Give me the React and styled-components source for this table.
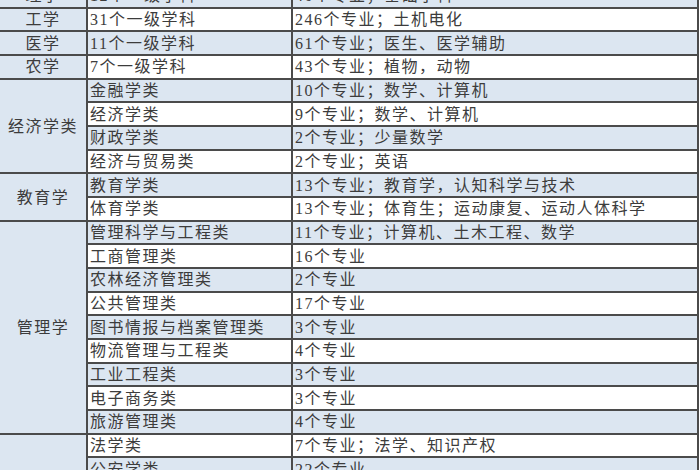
import styled, { createGlobalStyle } from "styled-components";

const GlobalStyle = createGlobalStyle`
  html, body {
    margin: 0;
    padding: 0;
    background: #ffffff;
  }
`;

const groups = [
  { name: "理学", rows: [["12个一级学科", "40个专业；基础学科"]] },
  { name: "工学", rows: [["31个一级学科", "246个专业；土机电化"]] },
  { name: "医学", rows: [["11个一级学科", "61个专业；医生、医学辅助"]] },
  { name: "农学", rows: [["7个一级学科", "43个专业；植物，动物"]] },
  {
    name: "经济学类",
    rows: [
      ["金融学类", "10个专业；数学、计算机"],
      ["经济学类", "9个专业；数学、计算机"],
      ["财政学类", "2个专业；少量数学"],
      ["经济与贸易类", "2个专业；英语"],
    ],
  },
  {
    name: "教育学",
    rows: [
      ["教育学类", "13个专业；教育学，认知科学与技术"],
      ["体育学类", "13个专业；体育生；运动康复、运动人体科学"],
    ],
  },
  {
    name: "管理学",
    rows: [
      ["管理科学与工程类", "11个专业；计算机、土木工程、数学"],
      ["工商管理类", "16个专业"],
      ["农林经济管理类", "2个专业"],
      ["公共管理类", "17个专业"],
      ["图书情报与档案管理类", "3个专业"],
      ["物流管理与工程类", "4个专业"],
      ["工业工程类", "3个专业"],
      ["电子商务类", "3个专业"],
      ["旅游管理类", "4个专业"],
    ],
  },
  {
    name: "法学",
    rows: [
      ["法学类", "7个专业；法学、知识产权"],
      ["公安学类", "22个专业"],
      ["政治学类", "4个专业"],
      ["社会学类", "5个专业"],
      ["民族学类", "1个专业"],
    ],
  },
];

export default function App() {
  let index = 0;
  return (
    <>
      <GlobalStyle />
      <Viewport>
        <Table>
          <colgroup>
            <col style={{ width: 88 }} />
            <col style={{ width: 205 }} />
            <col />
          </colgroup>
          <tbody>
            {groups.map((group) =>
              group.rows.map(([sub, detail], i) => {
                const shaded = index++ % 2 === 0;
                return (
                  <Row key={group.name + sub} $shaded={shaded}>
                    {i === 0 && (
                      <GroupCell rowSpan={group.rows.length}>{group.name}</GroupCell>
                    )}
                    <Cell>{sub}</Cell>
                    <Cell>{detail}</Cell>
                  </Row>
                );
              })
            )}
          </tbody>
        </Table>
      </Viewport>
    </>
  );
}

const Viewport = styled.div`
  width: 700px;
  height: 470px;
  overflow: hidden;
  background: #ffffff;
`;

const Table = styled.table`
  width: 701px;
  margin: -17px 0 0 -2px;
  border-collapse: collapse;
  table-layout: fixed;
  font-family: "Liberation Serif", "Noto Sans CJK SC", serif;
  font-size: 16px;
  letter-spacing: 1.5px;
  color: #3c3c3c;
`;

const Row = styled.tr`
  height: 23.68px;
  background: ${(p) => (p.$shaded ? "#dce6f1" : "#ffffff")};
`;

const Cell = styled.td`
  border: 2px solid #4b4b4b;
  padding: 0 2px;
  height: 21.68px;
  line-height: 19px;
  white-space: nowrap;
  overflow: hidden;
  vertical-align: middle;
`;

const GroupCell = styled(Cell)`
  background: #dce6f1;
  text-align: center;
  padding: 0;
`;
